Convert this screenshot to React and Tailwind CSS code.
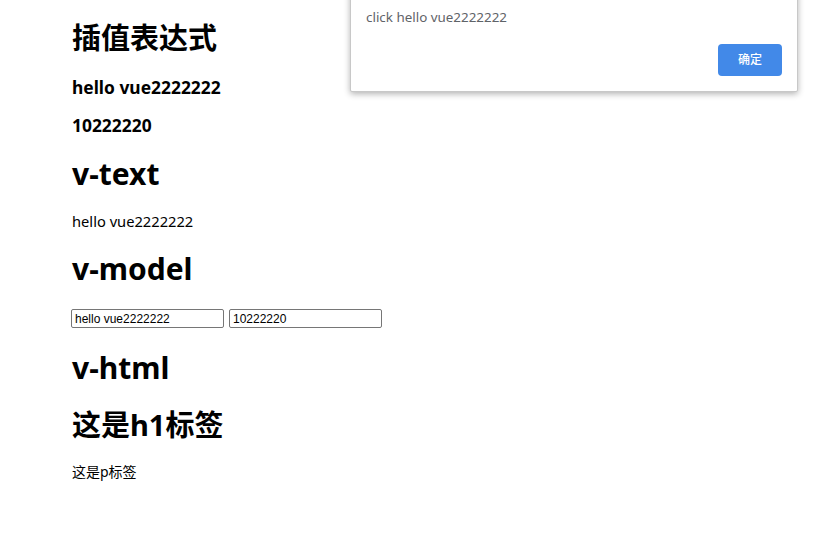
export default function App() {
  const font = { fontFamily: '"Noto Sans", "Noto Sans CJK SC", sans-serif' };
  return (
    <div className="relative w-[829px] h-[556px] bg-white overflow-hidden text-black" style={font}>
      <div className="pl-[72px] flex flex-col items-start">
        <h1 className="mt-[22px] text-[29px] leading-[32px] font-bold">插值表达式</h1>
        <h3 className="mt-[23px] text-[17.4px] leading-[20px] font-bold">hello vue2222222</h3>
        <h3 className="mt-[18px] text-[17.4px] leading-[20px] font-bold">10222220</h3>
        <h1 className="mt-[23px] text-[30px] leading-[32px] font-bold">v-text</h1>
        <p className="mt-[21px] text-[14.7px] leading-[20px]">hello vue2222222</p>
        <h1 className="mt-[22px] text-[30px] leading-[32px] font-bold">v-model</h1>
        <div className="mt-[24px] flex gap-[5px] -ml-[1px]">
          <input
            readOnly
            value="hello vue2222222"
            className="w-[153px] h-[19px] border border-[#767676] rounded-[2px] px-[3px] text-[12px] leading-[17px] text-black"
            style={{ fontFamily: '"Liberation Sans", Arial, sans-serif' }}
          />
          <input
            readOnly
            value="10222220"
            className="w-[153px] h-[19px] border border-[#767676] rounded-[2px] px-[3px] text-[12px] leading-[17px] text-black"
            style={{ fontFamily: '"Liberation Sans", Arial, sans-serif' }}
          />
        </div>
        <h1 className="mt-[24px] text-[30px] leading-[32px] font-bold">v-html</h1>
        <h1 className="mt-[25px] text-[29px] leading-[32px] font-bold">这是h1标签</h1>
        <p className="mt-[21px] text-[14px] leading-[20px]">这是p标签</p>
      </div>

      <div className="absolute left-[350px] top-[-10px] w-[448px] h-[102px] bg-white rounded-[2px] border border-[#c8c8c8] shadow-[0_2px_6px_rgba(0,0,0,0.3)] flex flex-col">
        <div className="pl-[15px] pt-[17px] text-[13.4px] leading-[18px] text-[#5f6368]">click hello vue2222222</div>
        <div className="flex justify-end pr-[15px] mt-auto pb-[15px]">
          <button className="w-[64px] h-[32px] bg-[#4289e8] rounded-[4px] text-white text-[12px] font-medium">确定</button>
        </div>
      </div>
    </div>
  );
}
